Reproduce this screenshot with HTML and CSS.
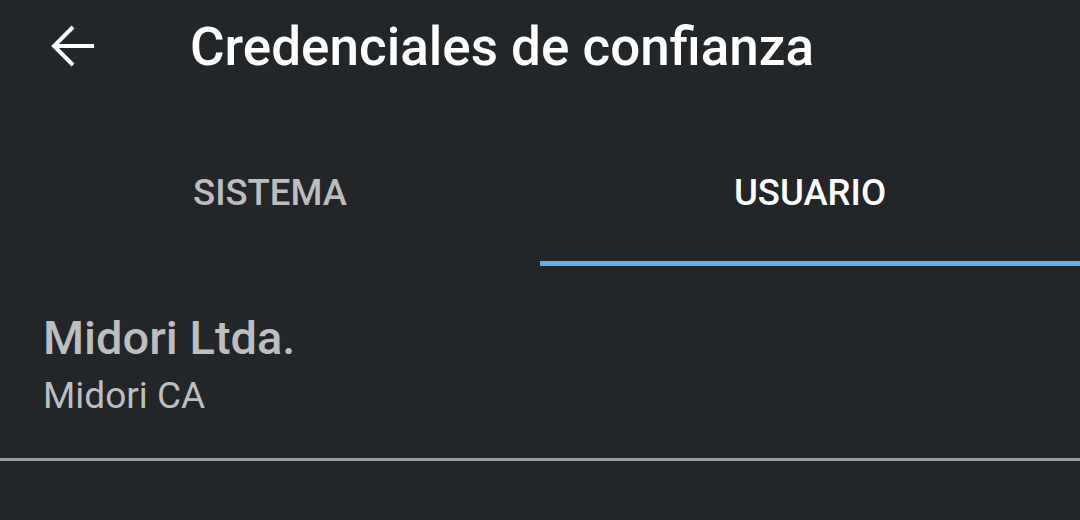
FILE: index.html
```html
<!DOCTYPE html>
<html lang="es">
<head>
<meta charset="utf-8">
<link rel="stylesheet" href="styles.css">
</head>
<body>
<div class="app">
  <header class="toolbar">
    <button class="back" aria-label="Atrás">
      <svg width="48" height="48" viewBox="0 0 48 48"><path d="M46 24H7M25 5L6 24l19 19" fill="none" stroke="#fff" stroke-width="4"/></svg>
    </button>
    <h1 class="title">Credenciales de confianza</h1>
  </header>
  <nav class="tabs">
    <div class="tab">SISTEMA</div>
    <div class="tab active">USUARIO</div>
  </nav>
  <div class="item">
    <div class="item-title">Midori Ltda.</div>
    <div class="item-sub">Midori CA</div>
  </div>
</div>
</body>
</html>
```
FILE: styles.css
```css
* { box-sizing: border-box; }
html, body { margin: 0; padding: 0; }
body {
  width: 1080px;
  height: 520px;
  background: #222629;
  font-family: Roboto, "Liberation Sans", sans-serif;
  overflow: hidden;
}
.app { display: flex; flex-direction: column; }
.toolbar {
  height: 120px;
  display: flex;
  align-items: flex-start;
  padding-left: 48px;
  background: #222629;
  border-bottom: 1px solid #1f2326;
}
.back {
  background: none;
  border: 0;
  padding: 0;
  width: 48px;
  height: 48px;
  margin-top: 22px;
  margin-right: 94px;
  display: flex;
}
.title {
  margin: 15px 0 0;
  color: #fff;
  font-size: 53px;
  line-height: 64px;
  font-weight: 500;
}
.tabs {
  display: flex;
  height: 146px;
}
.tab {
  flex: 1;
  display: flex;
  align-items: center;
  justify-content: center;
  color: #bdbdbd;
  font-size: 36.5px;
  font-weight: 500;
  padding-top: 4px;
  border-bottom: 5px solid transparent;
}
.tab.active {
  color: #fff;
  border-bottom-color: #6aaef0;
}
.item {
  padding: 44px 43px 0;
  height: 195px;
  border-bottom: 3px solid #9a9c9e;
}
.item-title {
  color: #bdbec0;
  font-size: 47px;
  font-weight: 500;
  line-height: 56px;
}
.item-sub {
  margin-top: 8px;
  color: #bdbec0;
  font-size: 37px;
  line-height: 44px;
}
```
